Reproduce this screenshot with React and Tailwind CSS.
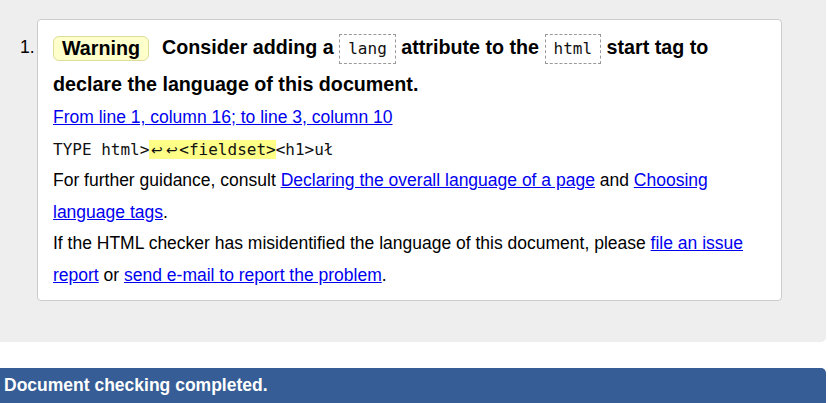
import React from 'react';

const Code = ({ children }) => (
    <code className="inline-block align-middle h-[30px] px-[8px] border border-dashed border-[#999] font-['DejaVu_Sans_Mono',monospace] font-normal text-[16px] leading-[28px] text-[#111]">
        {children}
    </code>
);

const Link = ({ children }) => (
    <a href="#" className="text-[#0000ee] underline">
        {children}
    </a>
);

const Arrow = () => (
    <span className="inline-block w-[15px] text-center font-['DejaVu_Sans',sans-serif] text-[14px]">↩</span>
);

const App = () => {
    return (
        <div className="font-['Liberation_Sans',Arial,sans-serif] text-black bg-white w-[828px] h-[403px] overflow-hidden">
            <div className="bg-[#eeeeee] w-[826px] rounded-br-[5px] pt-[19px] pb-[41px]">
                <ol className="flex">
                    <li className="flex">
                        <span className="w-[37px] pl-[20px] text-[17.5px] leading-[56px]">1.</span>
                        <div className="w-[745px] bg-white border border-[#cccccc] rounded-[4px] pl-[15px] pr-[15px] pt-[9px] pb-[9px]">
                            <p className="text-[19.7px] font-bold leading-[37px]">
                                <span className="inline-block align-middle h-[25px] leading-[23px] px-[8px] mr-[13px] bg-[#ffffcc] border border-[#dddd99] rounded-[6px]">
                                    Warning
                                </span>
                                Consider adding a <Code>lang</Code> attribute to the <Code>html</Code> start tag to declare the language of this document.
                            </p>
                            <p className="text-[17.5px] leading-[31px] -mt-[1px]">
                                <Link>From line 1, column 16; to line 3, column 10</Link>
                            </p>
                            <p className="font-['DejaVu_Sans_Mono',monospace] text-[16px] leading-[33px] text-[#111]">
                                TYPE html&gt;<span className="bg-[#ffff88]"><span className="underline decoration-dotted decoration-[#555]"><Arrow /><Arrow /></span>&lt;fieldset&gt;</span>&lt;h1&gt;uł
                            </p>
                            <p className="text-[17.5px] leading-[31.5px] -mt-[2px]">
                                For further guidance, consult <Link>Declaring the overall language of a page</Link> and <Link>Choosing language tags</Link>.
                            </p>
                            <p className="text-[17.5px] leading-[31.5px]">
                                If the HTML checker has misidentified the language of this document, please <Link>file an issue report</Link> or <Link>send e-mail to report the problem</Link>.
                            </p>
                        </div>
                    </li>
                </ol>
            </div>
            <div className="mt-[26px] w-[826px] bg-[#365d95] rounded-tr-[5px] px-[4px] py-[7px] text-white font-bold text-[17.5px] leading-[21px]">
                Document checking completed.
            </div>
        </div>
    );
};

export default App;
